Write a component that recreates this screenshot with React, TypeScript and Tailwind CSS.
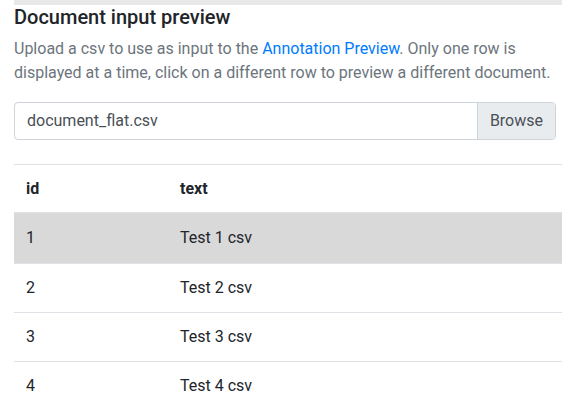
import React from "react";

const rows = [
  { id: "1", text: "Test 1 csv", active: true },
  { id: "2", text: "Test 2 csv", active: false },
  { id: "3", text: "Test 3 csv", active: false },
  { id: "4", text: "Test 4 csv", active: false },
];

export default function App() {
  return (
    <div
      className="w-[562px] h-[415px] overflow-hidden bg-white pl-[14px]"
      style={{ fontFamily: "Roboto, 'Liberation Sans', sans-serif" }}
    >
      <div className="h-[5px] bg-[#e9e9e9]" />
      <h5 className="text-[20px] leading-[24px] font-medium text-[#212529] mb-[8px]">
        Document input preview
      </h5>
      <p className="text-[16px] leading-[24px] text-[#6c757d]">
        Upload a csv to use as input to the <a className="text-[#007bff]">Annotation Preview</a>.
        Only one row is displayed at a time, click on a different row to preview a different
        document.
      </p>
      <div className="mt-[17px] mr-[6px] flex h-[38px] rounded-[4px] border border-[#ced4da] text-[16px] text-[#495057]">
        <div className="flex-1 flex items-center pl-[12px]">document_flat.csv</div>
        <div className="flex items-center px-[12px] bg-[#e9ecef] border-l border-[#ced4da] rounded-r-[3px]">
          Browse
        </div>
      </div>
      <div className="mt-[24px] text-[16px] text-[#212529]">
        <div className="flex h-[49px] items-center border-t border-b border-[#dee2e6] font-bold">
          <div className="w-[154px] pl-[12px]">id</div>
          <div className="pl-[12px]">text</div>
        </div>
        {rows.map((r) => (
          <div
            key={r.id}
            className={
              r.active
                ? "flex h-[50px] items-center bg-[#d9d9d9]"
                : "flex h-[49px] items-center border-t border-[#dee2e6]"
            }
          >
            <div className="w-[154px] pl-[12px]">{r.id}</div>
            <div className="pl-[12px]">{r.text}</div>
          </div>
        ))}
      </div>
    </div>
  );
}
